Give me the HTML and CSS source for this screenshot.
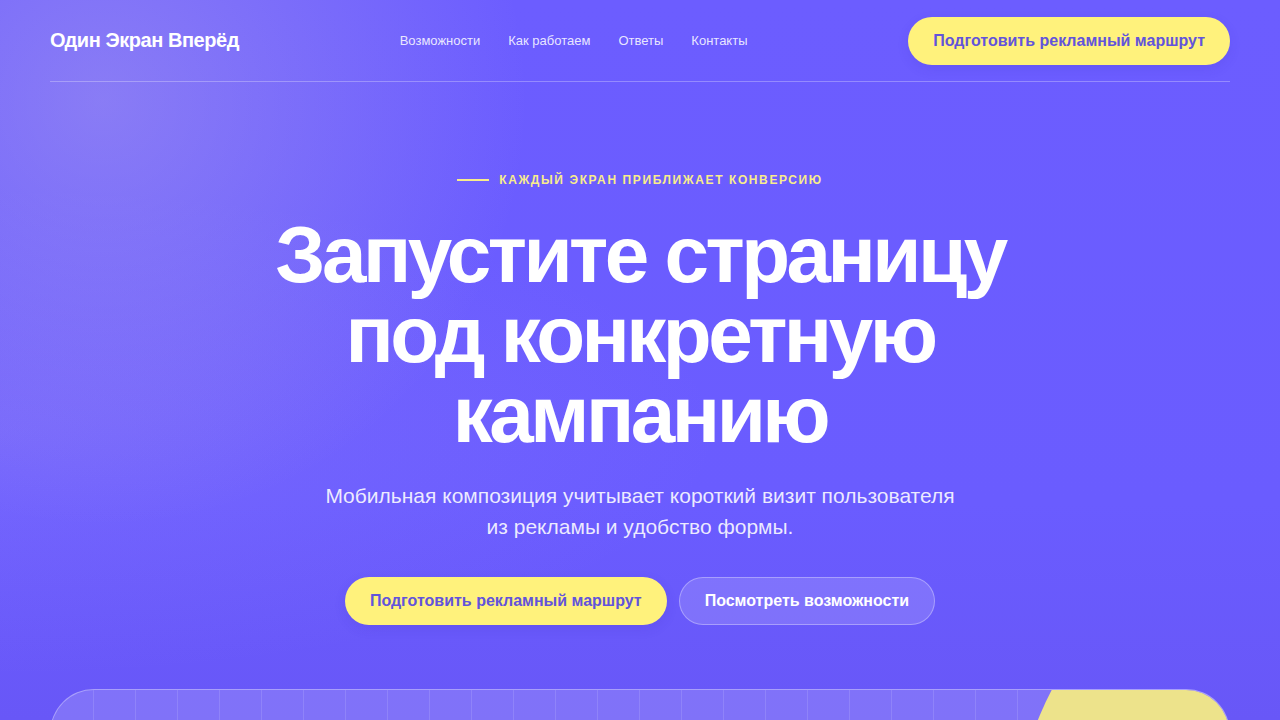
FILE: index.html
```html
<!DOCTYPE html>
<html lang="ru">
<head>
<meta charset="utf-8">
<title>Один Экран Вперёд</title>
<link rel="stylesheet" href="styles.css">
</head>
<body>
<div class="page">
  <header class="header">
    <div class="logo">Один Экран Вперёд</div>
    <nav class="nav">
      <a href="#">Возможности</a>
      <a href="#">Как работаем</a>
      <a href="#">Ответы</a>
      <a href="#">Контакты</a>
    </nav>
    <a class="btn btn-yellow" href="#">Подготовить рекламный маршрут</a>
  </header>

  <section class="hero">
    <div class="eyebrow"><span class="eyebrow-line"></span>Каждый экран приближает конверсию</div>
    <h1 class="title">Запустите страницу под конкретную кампанию</h1>
    <p class="lead">Мобильная композиция учитывает короткий визит пользователя из рекламы и удобство формы.</p>
    <div class="actions">
      <a class="btn btn-yellow" href="#">Подготовить рекламный маршрут</a>
      <a class="btn btn-ghost" href="#">Посмотреть возможности</a>
    </div>
  </section>

  <div class="preview">
    <div class="preview-grid"></div>
    <div class="preview-blob"></div>
  </div>
</div>
</body>
</html>
```

FILE: styles.css
```css
* { box-sizing: border-box; }
html, body { margin: 0; padding: 0; }
body {
  font-family: "Liberation Sans", Arial, sans-serif;
  color: #fff;
  background-color: #6b5cff;
  background-image:
    radial-gradient(circle at 8% 14%, rgba(200, 190, 225, 0.32) 0, rgba(200, 190, 225, 0) 32%),
    radial-gradient(ellipse at 0% 60%, rgba(180, 160, 240, 0.16) 0, rgba(180, 160, 240, 0) 40%),
    linear-gradient(180deg, #6c5dff 0%, #6a5cff 70%, #6857f7 100%);
  height: 720px;
  overflow: hidden;
}
a { text-decoration: none; color: inherit; }

.page {
  width: 1180px;
  margin: 0 auto;
}

.header {
  display: flex;
  align-items: center;
  justify-content: space-between;
  height: 82px;
  border-bottom: 1px solid rgba(255, 255, 255, 0.28);
}
.logo {
  font-weight: 700;
  font-size: 20px;
  letter-spacing: -0.45px;
}
.nav {
  display: flex;
  gap: 28px;
  font-size: 13px;
  color: rgba(255, 255, 255, 0.86);
}

.btn {
  display: inline-flex;
  align-items: center;
  justify-content: center;
  height: 48px;
  padding: 0 25px;
  border-radius: 24px;
  font-weight: 700;
  font-size: 16px;
}
.btn-yellow {
  background: #fff27c;
  color: #6254db;
  box-shadow: 0 4px 12px rgba(60, 40, 180, 0.12);
}
.btn-ghost {
  background: rgba(255, 255, 255, 0.15);
  border: 1px solid rgba(255, 255, 255, 0.32);
  color: #fff;
}

.hero {
  display: flex;
  flex-direction: column;
  align-items: center;
  text-align: center;
  padding-top: 90px;
}
.eyebrow {
  display: flex;
  align-items: center;
  gap: 10px;
  font-size: 12px;
  font-weight: 700;
  letter-spacing: 1.6px;
  text-transform: uppercase;
  color: #f8ec8c;
  line-height: 16px;
}
.eyebrow-line {
  width: 32px;
  height: 2px;
  background: #f8ec8c;
}
.title {
  margin: 27px 0 0;
  max-width: 820px;
  font-size: 80px;
  line-height: 80px;
  font-weight: 700;
  letter-spacing: -3.5px;
  color: #fff;
}
.lead {
  margin: 25px 0 0;
  max-width: 640px;
  font-size: 21px;
  line-height: 31px;
  color: rgba(255, 255, 255, 0.88);
}
.actions {
  display: flex;
  gap: 12px;
  margin-top: 35px;
}

.preview {
  position: relative;
  margin-top: 64px;
  height: 300px;
  border-radius: 44px;
  overflow: hidden;
  background: rgba(255, 255, 255, 0.16);
  border: 1px solid rgba(255, 255, 255, 0.32);
}
.preview-grid {
  position: absolute;
  inset: 0;
  background-image: linear-gradient(90deg, rgba(255, 255, 255, 0.12) 1px, transparent 1px);
  background-size: 42px 42px;
  background-position: 42px 0;
}
.preview-blob {
  position: absolute;
  width: 600px;
  height: 600px;
  border-radius: 50%;
  left: 966px;
  top: 0;
  margin-top: -160px;
  background: #ede38b;
}
```
